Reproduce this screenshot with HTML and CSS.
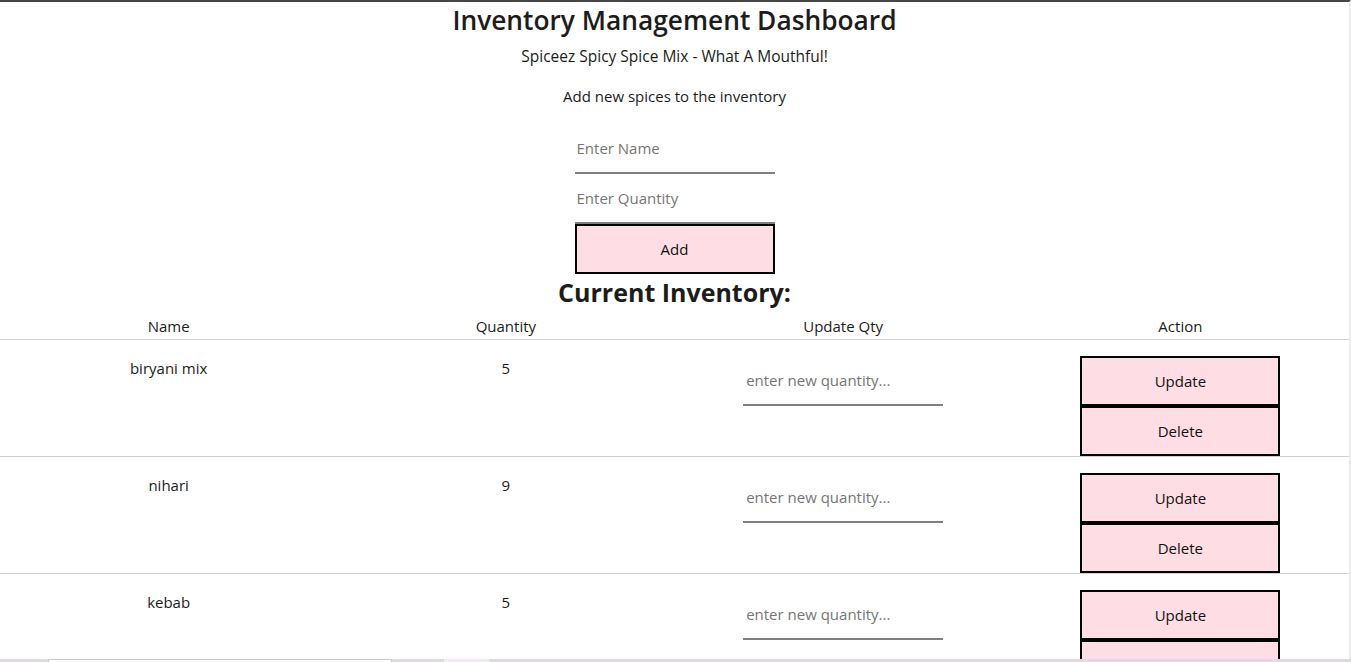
FILE: index.html
```html
<!DOCTYPE html>
<html lang="en">
<head>
<meta charset="utf-8">
<title>Inventory Management Dashboard</title>
<link rel="stylesheet" href="styles.css">
</head>
<body>
<div class="page">
  <header class="intro">
    <h1 class="title">Inventory Management Dashboard</h1>
    <p class="subtitle">Spiceez Spicy Spice Mix - What A Mouthful!</p>
    <p class="lead">Add new spices to the inventory</p>
  </header>
  <form class="add-form">
    <input class="line-input" type="text" placeholder="Enter Name">
    <input class="line-input" type="text" placeholder="Enter Quantity">
    <button class="pink-btn" type="button">Add</button>
  </form>
  <h2 class="section-title">Current Inventory:</h2>
  <table class="inventory">
    <thead>
      <tr><th>Name</th><th>Quantity</th><th>Update Qty</th><th>Action</th></tr>
    </thead>
    <tbody>
      <tr>
        <td class="text-cell">biryani mix</td>
        <td class="text-cell">5</td>
        <td><input class="line-input qty-input" type="text" placeholder="enter new quantity..."></td>
        <td><button class="pink-btn" type="button">Update</button><button class="pink-btn" type="button">Delete</button></td>
      </tr>
      <tr>
        <td class="text-cell">nihari</td>
        <td class="text-cell">9</td>
        <td><input class="line-input qty-input" type="text" placeholder="enter new quantity..."></td>
        <td><button class="pink-btn" type="button">Update</button><button class="pink-btn" type="button">Delete</button></td>
      </tr>
      <tr>
        <td class="text-cell">kebab</td>
        <td class="text-cell">5</td>
        <td><input class="line-input qty-input" type="text" placeholder="enter new quantity..."></td>
        <td><button class="pink-btn" type="button">Update</button><button class="pink-btn" type="button">Delete</button></td>
      </tr>
    </tbody>
  </table>
</div>
<div class="bottom-strip">
  <span class="strip-a"></span><span class="strip-b"></span><span class="strip-c"></span><span class="strip-d"></span>
</div>
</body>
</html>
```

FILE: styles.css
```css
html {
  overflow: hidden;
}
body {
  margin: 0;
  border-top: 2px solid #474747;
  border-right: 2px solid #ececec;
  font-family: "Open Sans", "Noto Sans", sans-serif;
  font-size: 15px;
  color: #1c1c1c;
  background: #fff;
}
.page {
  display: flex;
  flex-direction: column;
  align-items: center;
}
.intro {
  display: flex;
  flex-direction: column;
  align-items: center;
}
.title {
  margin: 0;
  font-size: 26.3px;
  font-weight: 600;
  line-height: 36px;
}
.subtitle {
  margin: 7px 0 0;
  font-size: 15.5px;
  line-height: 22px;
}
.lead {
  margin: 18px 0 0;
  line-height: 22px;
}
.add-form {
  margin-top: 17px;
  display: flex;
  flex-direction: column;
  width: 200px;
}
.line-input {
  box-sizing: border-box;
  width: 200px;
  height: 50px;
  border: none;
  border-bottom: 2px solid #808080;
  padding: 0 2px;
  font-family: inherit;
  font-size: 15px;
  color: #1c1c1c;
  background: transparent;
  outline: none;
}
.line-input::placeholder {
  color: #767676;
}
.pink-btn {
  display: block;
  box-sizing: border-box;
  width: 200px;
  height: 50px;
  margin: 0 auto;
  border: 2px solid #000;
  background: #ffdde4;
  font-family: inherit;
  font-size: 15px;
  color: #111;
  padding: 0;
}
.section-title {
  margin: 2px 0 0;
  font-size: 25px;
  font-weight: 700;
  line-height: 32px;
}
.inventory {
  width: 100%;
  table-layout: fixed;
  border-collapse: collapse;
}
.inventory th {
  font-weight: 400;
  line-height: 22px;
  padding: 7px 0 2px;
  border-bottom: 1px solid #cfcfcf;
}
.inventory td {
  text-align: center;
  vertical-align: top;
  line-height: 22px;
  padding: 16px 0 0;
  border-bottom: 1px solid #cfcfcf;
}
.inventory td.text-cell {
  padding-top: 17px;
}
.qty-input {
  display: block;
  margin: 0 auto;
  padding-left: 3px;
}
.bottom-strip {
  position: fixed;
  left: 0;
  right: 0;
  bottom: 0;
  height: 3px;
  display: flex;
  background: #e6d5e8;
}
.strip-a {
  width: 48px;
}
.strip-b {
  width: 342px;
  background: #fff;
  border: 1px solid #c8c8c8;
  border-bottom: none;
}
.strip-c {
  width: 52px;
}
.strip-d {
  width: 45px;
  background: #f1eaf2;
}
```
